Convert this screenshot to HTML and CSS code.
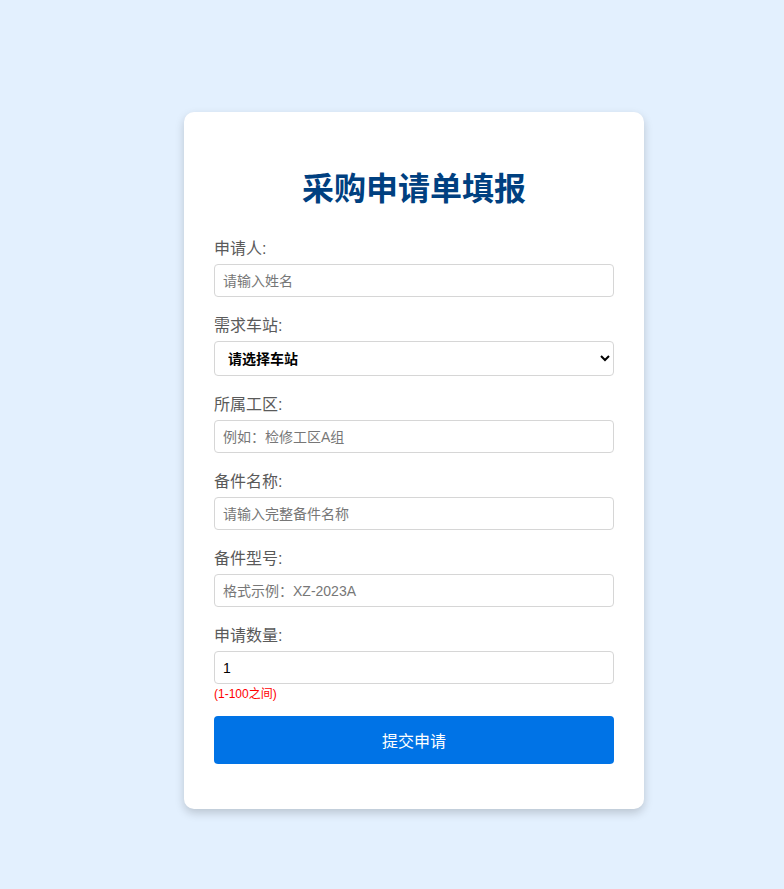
FILE: index.html
```html
<!DOCTYPE html>
<html lang="zh-CN">
<head>
    <meta charset="UTF-8">
    <title>采购申请单填报</title>
    <link rel="stylesheet" href="styles.css">
</head>
<body>
<div class="card">
    <h1>采购申请单填报</h1>

    <form id="purchaseForm">
        <div class="form-group">
            <label>申请人:</label>
            <input type="text" name="applicant" placeholder="请输入姓名" required>
        </div>

        <div class="form-group">
            <label>需求车站:</label>
            <select name="station" required>
                <option value="">请选择车站</option>
            </select>
        </div>

        <div class="form-group">
            <label>所属工区:</label>
            <input type="text" name="area" placeholder="例如：检修工区A组" required>
        </div>

        <div class="form-group">
            <label>备件名称:</label>
            <input type="text" name="part_name" placeholder="请输入完整备件名称" required>
        </div>

        <div class="form-group">
            <label>备件型号:</label>
            <input type="text" name="part_model" placeholder="格式示例：XZ-2023A" required>
        </div>

        <div class="form-group last">
            <label>申请数量:</label>
            <input type="number" name="quantity" min="1" max="100" value="1" required>
            <div class="hint">(1-100之间)</div>
        </div>

        <button type="submit">提交申请</button>
    </form>
</div>
</body>
</html>
```

FILE: styles.css
```css
body {
    margin: 0;
    background-color: #e3f0fe;
    font-family: "Liberation Sans", "Noto Sans CJK SC", sans-serif;
}
.card {
    width: 400px;
    margin: 112px 0 80px 184px;
    padding: 30px 30px 45px;
    background-color: #fff;
    border-radius: 10px;
    box-shadow: 0 4px 10px rgba(0, 0, 0, 0.18);
}
h1 {
    margin: 27px 0 31px;
    font-size: 32px;
    line-height: 40px;
    text-align: center;
    color: #004080;
}
.form-group {
    margin-bottom: 20px;
}
.form-group.last {
    margin-bottom: 14px;
}
label {
    display: block;
    margin-bottom: 6px;
    font-size: 16px;
    line-height: 18px;
    color: #5a5a5a;
}
input, select {
    display: block;
    box-sizing: border-box;
    width: 100%;
    height: 33px;
    padding: 0 8px;
    font-family: inherit;
    font-size: 14px;
    border: 1px solid #d6d6d6;
    border-radius: 4px;
    background-color: #fff;
    color: #000;
}
input::placeholder {
    color: #777;
}
select {
    height: 35px;
    padding: 0 9px;
    font-weight: bold;
}
.hint {
    margin-top: 2px;
    font-size: 12px;
    line-height: 16px;
    color: #f00;
}
button {
    display: block;
    width: 100%;
    height: 48px;
    font-family: inherit;
    font-size: 16px;
    border: none;
    border-radius: 4px;
    background-color: #0073e6;
    color: #fff;
    cursor: pointer;
}
```
